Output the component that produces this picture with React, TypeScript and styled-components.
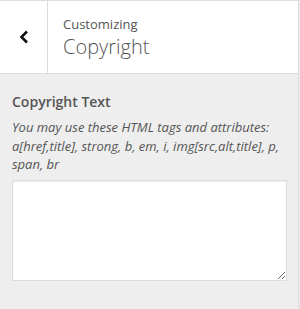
import React from "react";
import styled, { createGlobalStyle } from "styled-components";

const Global = createGlobalStyle`
  html, body { margin: 0; padding: 0; background: #eeeeee; }
  body { font-family: "Open Sans", "Liberation Sans", sans-serif; }
`;

const Panel = styled.div`
  width: 299px;
  height: 309px;
  box-sizing: border-box;
  border-right: 1px solid #dddddd;
  background: #eeeeee;
`;

const Header = styled.div`
  display: flex;
  height: 74px;
  box-sizing: border-box;
  background: #ffffff;
  border-top: 1px solid #dddddd;
  border-bottom: 1px solid #dddddd;
`;

const BackButton = styled.button`
  width: 48px;
  flex: none;
  border: none;
  border-right: 1px solid #dddddd;
  background: #ffffff;
  display: flex;
  align-items: center;
  justify-content: center;
  padding: 0 0 0 1px;
  color: #111;
`;

const TitleBox = styled.div`
  display: flex;
  flex-direction: column;
  justify-content: center;
  padding-left: 15px;
  color: #555555;
`;

const Small = styled.span`
  font-size: 13px;
  line-height: 20px;
`;

const Title = styled.h3`
  margin: 0;
  font-size: 20px;
  font-weight: 300;
  line-height: 26px;
`;

const Body = styled.div`
  padding: 18px 12px 12px 12px;
`;

const Label = styled.div`
  font-size: 14px;
  font-weight: 600;
  color: #555555;
  line-height: 20px;
  margin-bottom: 6px;
`;

const Description = styled.p`
  margin: 0 0 6px 0;
  font-size: 13px;
  font-style: italic;
  color: #555555;
  line-height: 18.5px;
`;

const TextArea = styled.textarea`
  display: block;
  width: 275px;
  height: 101px;
  box-sizing: border-box;
  border: 1px solid #dddddd;
  box-shadow: inset 0 1px 2px rgba(0, 0, 0, 0.07);
  background: #ffffff;
  margin: 0;
  outline: none;
`;

export default function App() {
  return (
    <>
      <Global />
      <Panel>
        <Header>
          <BackButton aria-label="Back">
            <svg width="12" height="16" viewBox="0 0 12 16">
              <path d="M9 2.5 L3.5 8 L9 13.5" fill="none" stroke="#111" strokeWidth="2.6" />
            </svg>
          </BackButton>
          <TitleBox>
            <Small>Customizing</Small>
            <Title>Copyright</Title>
          </TitleBox>
        </Header>
        <Body>
          <Label>Copyright Text</Label>
          <Description>
            You may use these HTML tags and attributes: a[href,title], strong, b, em, i, img[src,alt,title], p, span, br
          </Description>
          <TextArea />
        </Body>
      </Panel>
    </>
  );
}
